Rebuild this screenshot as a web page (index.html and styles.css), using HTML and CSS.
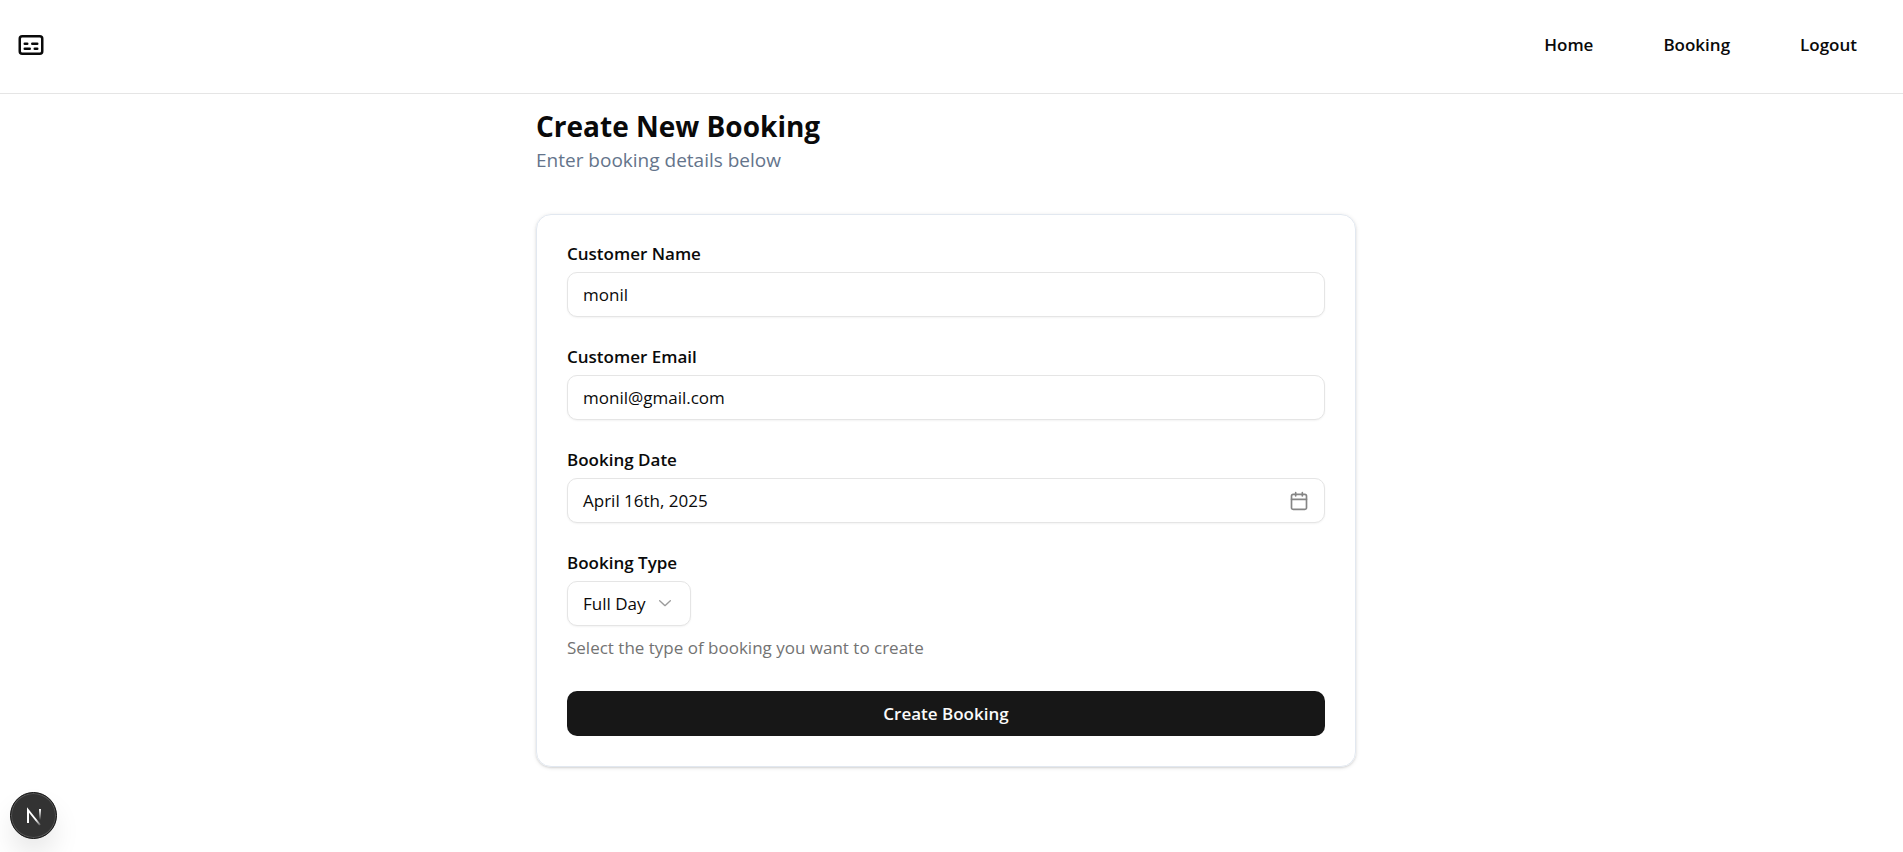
FILE: index.html
```html
<!DOCTYPE html>
<html lang="en">
<head>
<meta charset="utf-8">
<meta name="viewport" content="width=device-width, initial-scale=1">
<title>Create New Booking</title>
<link rel="stylesheet" href="styles.css">
</head>
<body>
<header class="navbar">
  <a class="logo" href="#" aria-label="Dashboard">
    <svg viewBox="0 0 24 24" width="30" height="30" fill="none" stroke="currentColor" stroke-width="2" stroke-linecap="round" stroke-linejoin="round"><rect x="3" y="5" width="18" height="14" rx="2"/><path d="M7 15h4M15 15h2M7 11h2M13 11h4"/></svg>
  </a>
  <nav class="links">
    <a href="#">Home</a>
    <a href="#">Booking</a>
    <a href="#">Logout</a>
  </nav>
</header>
<main class="page">
  <div class="content">
    <h1 class="title">Create New Booking</h1>
    <p class="subtitle">Enter booking details below</p>
    <form class="card">
      <div class="field">
        <label class="label" for="name">Customer Name</label>
        <input class="control" id="name" type="text" value="monil">
      </div>
      <div class="field">
        <label class="label" for="email">Customer Email</label>
        <input class="control" id="email" type="email" value="monil@gmail.com">
      </div>
      <div class="field">
        <label class="label" for="date">Booking Date</label>
        <button class="control date" id="date" type="button">
          <span>April 16th, 2025</span>
          <svg viewBox="0 0 24 24" width="20" height="20" fill="none" stroke="currentColor" stroke-width="2" stroke-linecap="round" stroke-linejoin="round"><path d="M8 2v4M16 2v4"/><rect width="18" height="18" x="3" y="4" rx="2"/><path d="M3 10h18"/></svg>
        </button>
      </div>
      <div class="field">
        <label class="label" for="type">Booking Type</label>
        <div class="select-wrap">
          <select class="control select" id="type"><option>Full Day</option></select>
          <svg class="chevron" viewBox="0 0 15 15" width="20" height="20" fill="currentColor"><path d="M3.13523 6.15803C3.3241 5.95657 3.64052 5.94637 3.84197 6.13523L7.5 9.56464L11.158 6.13523C11.3595 5.94637 11.6759 5.95657 11.8648 6.15803C12.0536 6.35949 12.0434 6.67591 11.842 6.86477L7.84197 10.6148C7.64964 10.7951 7.35036 10.7951 7.15803 10.6148L3.15803 6.86477C2.95657 6.67591 2.94637 6.35949 3.13523 6.15803Z"/></svg>
        </div>
        <p class="hint">Select the type of booking you want to create</p>
      </div>
      <button class="submit" type="submit">Create Booking</button>
    </form>
  </div>
</main>
<button class="dev-badge" type="button" aria-label="Open developer tools">
  <svg viewBox="0 0 40 40" width="40" height="40" fill="none">
    <defs>
      <linearGradient id="diagonal" x1="14" y1="13" x2="28" y2="30" gradientUnits="userSpaceOnUse"><stop offset=".6" stop-color="#fff"/><stop offset="1" stop-color="#fff" stop-opacity="0"/></linearGradient>
      <linearGradient id="stem" x1="0" y1="13" x2="0" y2="24" gradientUnits="userSpaceOnUse"><stop stop-color="#fff"/><stop offset="1" stop-color="#fff" stop-opacity="0"/></linearGradient>
    </defs>
    <path d="M14 27V14L26 29" stroke="url(#diagonal)" stroke-width="2"/>
    <path d="M26 13V24" stroke="url(#stem)" stroke-width="2"/>
  </svg>
</button>
</body>
</html>
```
FILE: styles.css
```css
* { box-sizing: border-box; }
body {
  margin: 0;
  background: #fff;
  color: #0a0a0a;
  font-family: "Open Sans", "Noto Sans", sans-serif;
  font-size: 17px;
  line-height: 24px;
}
h1, p { margin: 0; }
svg { display: block; flex: none; }
.navbar {
  display: flex;
  align-items: center;
  justify-content: space-between;
  padding: 22px 46px 26px 16px;
  min-height: 94px;
  border-bottom: 1px solid #e5e5e5;
}
.logo { color: inherit; }
.links { display: flex; gap: 70px; }
.links a { color: inherit; font-weight: 600; text-decoration: none; }
.page { padding: 12px 11px 20px 0; }
.content { max-width: 820px; margin: 0 auto; }
.title { font-size: 28px; line-height: 40px; font-weight: 700; }
.subtitle { font-size: 19px; line-height: 28px; color: #64748b; }
.card {
  display: flex;
  flex-direction: column;
  gap: 31px;
  margin-top: 40px;
  padding: 30px;
  border: 1px solid #e2e8f0;
  border-radius: 15px;
  box-shadow: 0 1px 4px rgba(0, 0, 0, .1), 0 1px 2px rgba(0, 0, 0, .1);
}
.field { display: flex; flex-direction: column; gap: 10px; }
.label { font-weight: 600; line-height: 17px; }
.control {
  width: 100%;
  height: 45px;
  padding: 0 15px;
  border: 1px solid #e5e5e5;
  border-radius: 10px;
  background: #fff;
  color: inherit;
  font: inherit;
  box-shadow: 0 1px 2px rgba(0, 0, 0, .05);
}
.date { display: flex; align-items: center; justify-content: space-between; }
.date svg { color: #858585; }
.select-wrap { position: relative; width: max-content; }
.select { appearance: none; width: auto; padding-right: 44px; }
.chevron { position: absolute; right: 16px; top: 11px; opacity: .4; pointer-events: none; }
.hint { color: #737373; }
.submit {
  height: 45px;
  border: 0;
  border-radius: 10px;
  background: #171717;
  color: #fafafa;
  font: inherit;
  font-weight: 600;
}
.dev-badge {
  position: fixed;
  left: 10px;
  bottom: 13px;
  display: grid;
  place-items: center;
  width: 47px;
  height: 47px;
  padding: 0;
  border: 1px solid #111;
  border-radius: 50%;
  background: #333;
  box-shadow: inset 0 0 0 1px #555, 0 16px 32px -8px rgba(0, 0, 0, .2);
}
```
